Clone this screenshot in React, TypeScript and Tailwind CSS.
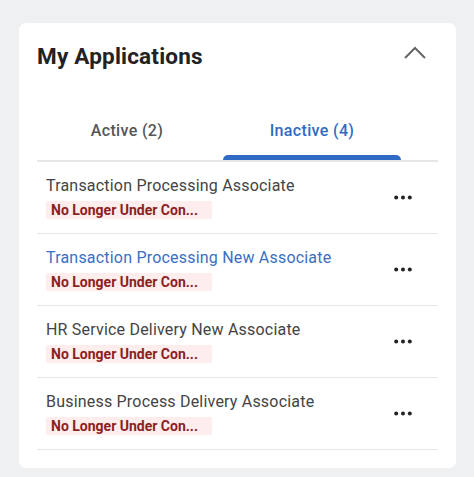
import React from "react";

const rows = [
  { title: "Transaction Processing Associate", link: false },
  { title: "Transaction Processing New Associate", link: true },
  { title: "HR Service Delivery New Associate", link: false },
  { title: "Business Process Delivery Associate", link: false },
];

function Dots() {
  return (
    <svg width="18" height="5" viewBox="0 0 18 5" className="shrink-0">
      <circle cx="2.2" cy="2.5" r="2" fill="#222" />
      <circle cx="9" cy="2.5" r="2" fill="#222" />
      <circle cx="15.8" cy="2.5" r="2" fill="#222" />
    </svg>
  );
}

export default function App() {
  return (
    <div
      className="w-[474px] h-[477px] bg-[#eef0f2] pt-[23px] pl-[19px] pr-[18px]"
      style={{ fontFamily: "Roboto, 'Liberation Sans', sans-serif" }}
    >
      <div className="bg-white rounded-[7px] px-[18px] pb-[18px]">
        <div className="flex items-start justify-between pt-[19px] h-[70px]">
          <h1 className="text-[22.5px] leading-[28px] font-bold text-[#222] tracking-[0.2px]">My Applications</h1>
          <svg width="24" height="14" viewBox="0 0 24 14" className="mr-[11px] mt-[4px]">
            <path d="M2 12 L12 2 L22 12" fill="none" stroke="#666" strokeWidth="2" />
          </svg>
        </div>
        <div className="flex gap-[6px] pt-[28px] border-b-2 border-[#e6e7e9]">
          <div className="w-[180px] h-[39px] flex justify-center text-[16px] leading-[20px] font-medium tracking-[0.35px] text-[#555]">
            Active (2)
          </div>
          <div className="w-[178px] h-[39px] flex justify-center text-[16px] leading-[20px] font-medium tracking-[0.35px] text-[#2f6bc4] relative">
            Inactive (4)
            <div className="absolute left-0 right-0 bottom-0 h-[5px] bg-[#2f6bc4] rounded-t-[5px]" />
          </div>
        </div>
        {rows.map((r, i) => (
          <div key={i} className="flex items-center border-b border-[#e6e7e9] pl-[9px] pr-[26px] pt-[14px] pb-[14px]">
            <div className="flex-1 flex flex-col gap-[5px]">
              <div className={`text-[16px] leading-[20px] tracking-[0.2px] ${r.link ? "text-[#3a6fc1]" : "text-[#444]"}`}>
                {r.title}
              </div>
              <div className="w-[166px] h-[18px] bg-[#fdeded] rounded-[2px] px-[5px] text-[14px] leading-[18px] font-bold text-[#8a1f1f] whitespace-nowrap overflow-hidden">
                No Longer Under Con...
              </div>
            </div>
            <Dots />
          </div>
        ))}
      </div>
    </div>
  );
}
